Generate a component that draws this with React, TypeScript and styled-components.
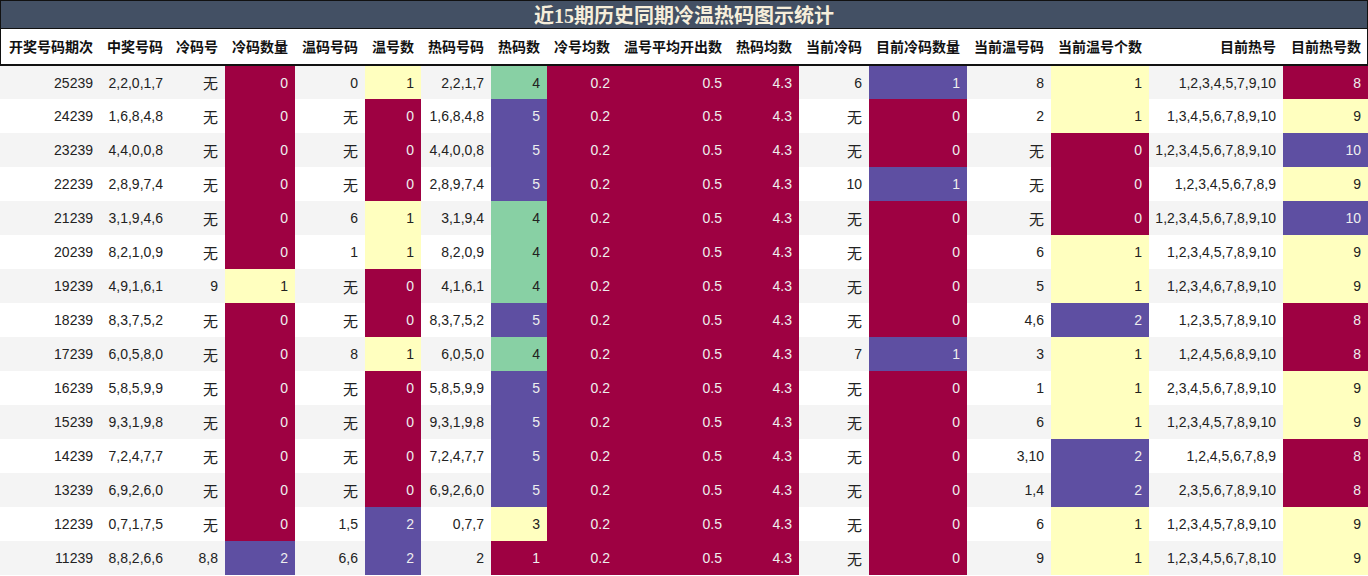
import React from "react";
import styled, { createGlobalStyle } from "styled-components";

const GlobalStyle = createGlobalStyle`
  html, body { margin: 0; padding: 0; background: #ffffff; }
  body { font-family: "Liberation Sans", "Noto Sans CJK SC", sans-serif; }
`;

const C = "#9e0142";
const P = "#5e4fa2";
const Y = "#ffffbf";
const G = "#88d0a4";

const widths = [100, 70, 55, 70, 70, 56, 70, 56, 70, 112, 70, 70, 98, 84, 98, 134, 85];

const headers = [
  "开奖号码期次", "中奖号码", "冷码号", "冷码数量", "温码号码", "温号数", "热码号码", "热码数",
  "冷号均数", "温号平均开出数", "热码均数", "当前冷码", "目前冷码数量", "当前温号码", "当前温号个数",
  "目前热号", "目前热号数",
];

type Row = [string, string, string, number, string, number, string, number, string, number, string, string, number];

// period, winning, cold, coldN, warm, warmN, hot, hotN, curCold, curColdN, curWarm, curWarmN, curHot, curHotN
const rows: [string, string, string, number, string, number, string, number, string, number, string, number, string, number][] = [
  ["25239", "2,2,0,1,7", "无", 0, "0", 1, "2,2,1,7", 4, "6", 1, "8", 1, "1,2,3,4,5,7,9,10", 8],
  ["24239", "1,6,8,4,8", "无", 0, "无", 0, "1,6,8,4,8", 5, "无", 0, "2", 1, "1,3,4,5,6,7,8,9,10", 9],
  ["23239", "4,4,0,0,8", "无", 0, "无", 0, "4,4,0,0,8", 5, "无", 0, "无", 0, "1,2,3,4,5,6,7,8,9,10", 10],
  ["22239", "2,8,9,7,4", "无", 0, "无", 0, "2,8,9,7,4", 5, "10", 1, "无", 0, "1,2,3,4,5,6,7,8,9", 9],
  ["21239", "3,1,9,4,6", "无", 0, "6", 1, "3,1,9,4", 4, "无", 0, "无", 0, "1,2,3,4,5,6,7,8,9,10", 10],
  ["20239", "8,2,1,0,9", "无", 0, "1", 1, "8,2,0,9", 4, "无", 0, "6", 1, "1,2,3,4,5,7,8,9,10", 9],
  ["19239", "4,9,1,6,1", "9", 1, "无", 0, "4,1,6,1", 4, "无", 0, "5", 1, "1,2,3,4,6,7,8,9,10", 9],
  ["18239", "8,3,7,5,2", "无", 0, "无", 0, "8,3,7,5,2", 5, "无", 0, "4,6", 2, "1,2,3,5,7,8,9,10", 8],
  ["17239", "6,0,5,8,0", "无", 0, "8", 1, "6,0,5,0", 4, "7", 1, "3", 1, "1,2,4,5,6,8,9,10", 8],
  ["16239", "5,8,5,9,9", "无", 0, "无", 0, "5,8,5,9,9", 5, "无", 0, "1", 1, "2,3,4,5,6,7,8,9,10", 9],
  ["15239", "9,3,1,9,8", "无", 0, "无", 0, "9,3,1,9,8", 5, "无", 0, "6", 1, "1,2,3,4,5,7,8,9,10", 9],
  ["14239", "7,2,4,7,7", "无", 0, "无", 0, "7,2,4,7,7", 5, "无", 0, "3,10", 2, "1,2,4,5,6,7,8,9", 8],
  ["13239", "6,9,2,6,0", "无", 0, "无", 0, "6,9,2,6,0", 5, "无", 0, "1,4", 2, "2,3,5,6,7,8,9,10", 8],
  ["12239", "0,7,1,7,5", "无", 0, "1,5", 2, "0,7,7", 3, "无", 0, "6", 1, "1,2,3,4,5,7,8,9,10", 9],
  ["11239", "8,8,2,6,6", "8,8", 2, "6,6", 2, "2", 1, "无", 0, "9", 1, "1,2,3,4,5,6,7,8,10", 9],
];

const countScale: Record<number, string> = { 0: C, 1: Y, 2: P };
const hotScale: Record<number, string> = { 1: C, 3: Y, 4: G, 5: P };
const curColdScale: Record<number, string> = { 0: C, 1: P };
const curHotScale: Record<number, string> = { 8: C, 9: Y, 10: P };

const darkFills = new Set([C, P]);

const Page = styled.div`
  width: 1368px;
  overflow: hidden;
`;

const Title = styled.div`
  box-sizing: border-box;
  height: 29px;
  background: #435064;
  border: 1px solid #111;
  color: #f6eedb;
  font-family: "Liberation Serif", "Noto Sans CJK SC", serif;
  font-weight: bold;
  font-size: 20px;
  display: flex;
  align-items: center;
  justify-content: center;
  letter-spacing: 0;
`;

const Table = styled.table`
  width: 1368px;
  border-collapse: collapse;
  table-layout: fixed;
`;

const HeadCell = styled.th`
  box-sizing: border-box;
  height: 36px;
  padding: 0 7px 2px 0;
  text-align: right;
  font-family: "Noto Sans CJK SC", "Liberation Sans", sans-serif;
  font-weight: bold;
  font-size: 14px;
  color: #111;
  white-space: nowrap;
  background: #fff;
  border-bottom: 2px solid #111;
  &:first-child { box-shadow: inset 1px 0 #111; }
  &:last-child { box-shadow: inset -1px 0 #111; }
`;

const BodyRow = styled.tr<{ $odd: boolean }>`
  background: ${(p) => (p.$odd ? "#f4f4f4" : "#ffffff")};
`;

const Cell = styled.td<{ $fill?: string }>`
  box-sizing: border-box;
  height: 34px;
  padding: 0 7px 0 0;
  text-align: right;
  font-size: 14px;
  white-space: nowrap;
  background: ${(p) => p.$fill ?? "transparent"};
  color: ${(p) => (p.$fill && darkFills.has(p.$fill) ? "#eeeeee" : "#222222")};
`;

const CjkText = styled.span`
  font-family: "Noto Sans CJK SC", sans-serif;
  font-size: 15px;
`;

const txt = (s: string) => (s === "无" ? <CjkText>无</CjkText> : s);

export default function App() {
  return (
    <Page>
      <GlobalStyle />
      <Title>近15期历史同期冷温热码图示统计</Title>
      <Table>
        <colgroup>
          {widths.map((w, i) => (
            <col key={i} style={{ width: w }} />
          ))}
        </colgroup>
        <thead>
          <tr>
            {headers.map((h) => (
              <HeadCell key={h}>{h}</HeadCell>
            ))}
          </tr>
        </thead>
        <tbody>
          {rows.map((r, i) => (
            <BodyRow key={r[0]} $odd={i % 2 === 0}>
              <Cell>{r[0]}</Cell>
              <Cell>{r[1]}</Cell>
              <Cell>{txt(r[2])}</Cell>
              <Cell $fill={countScale[r[3]]}>{r[3]}</Cell>
              <Cell>{txt(r[4])}</Cell>
              <Cell $fill={countScale[r[5]]}>{r[5]}</Cell>
              <Cell>{r[6]}</Cell>
              <Cell $fill={hotScale[r[7]]}>{r[7]}</Cell>
              <Cell $fill={C}>0.2</Cell>
              <Cell $fill={C}>0.5</Cell>
              <Cell $fill={C}>4.3</Cell>
              <Cell>{txt(r[8])}</Cell>
              <Cell $fill={curColdScale[r[9]]}>{r[9]}</Cell>
              <Cell>{txt(r[10])}</Cell>
              <Cell $fill={countScale[r[11]]}>{r[11]}</Cell>
              <Cell>{r[12]}</Cell>
              <Cell $fill={curHotScale[r[13]]}>{r[13]}</Cell>
            </BodyRow>
          ))}
        </tbody>
      </Table>
    </Page>
  );
}
